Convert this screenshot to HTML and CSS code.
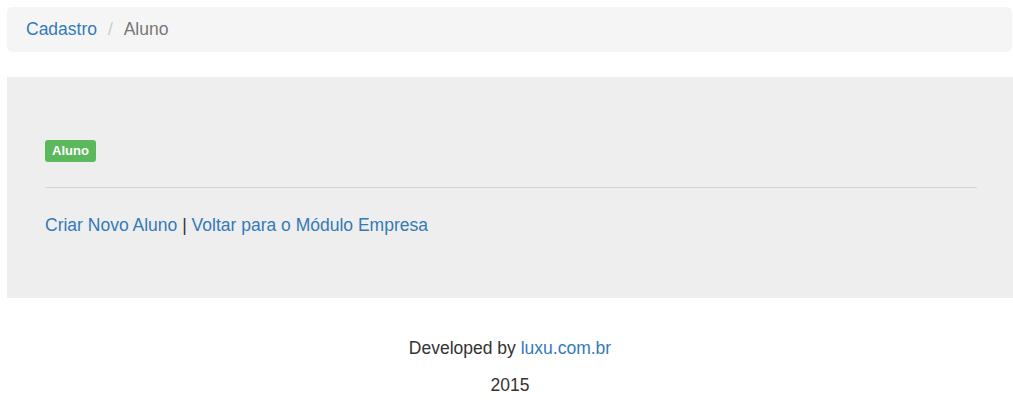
FILE: index.html
```html
<!DOCTYPE html>
<html lang="pt-BR">
<head>
<meta charset="utf-8">
<title>Cadastro - Aluno</title>
<link rel="stylesheet" href="styles.css">
</head>
<body>
<div class="page">
  <ol class="breadcrumb">
    <li><a href="#">Cadastro</a></li>
    <li class="active">Aluno</li>
  </ol>
  <div class="jumbotron">
    <div class="label-row"><span class="label">Aluno</span></div>
    <hr class="divider">
    <p class="links"><a href="#">Criar Novo Aluno</a> | <a href="#">Voltar para o Módulo Empresa</a></p>
  </div>
  <footer class="footer">
    <p class="footer-line">Developed by <a href="#">luxu.com.br</a></p>
    <p class="footer-line">2015</p>
  </footer>
</div>
</body>
</html>
```

FILE: styles.css
```css
html, body {
  margin: 0;
  padding: 0;
  background: #fff;
}
body {
  font-family: "Liberation Sans", Arial, Helvetica, sans-serif;
  font-size: 17.5px;
  line-height: 25px;
  color: #333;
}
a {
  color: #337ab7;
  text-decoration: none;
}
.page {
  padding: 7px 0 0 7px;
}
.breadcrumb {
  list-style: none;
  margin: 0 1px 25px 0;
  padding: 10px 19px;
  background: #f5f5f5;
  border-radius: 5px;
}
.breadcrumb li {
  display: inline-block;
}
.breadcrumb li + li::before {
  content: "/\00a0";
  padding: 0 6px;
  color: #ccc;
}
.breadcrumb .active {
  color: #777;
}
.jumbotron {
  background: #eee;
  padding: 63px 36px 60px 38px;
  margin-bottom: 38px;
}
.label-row {
  display: flex;
}
.label {
  font-size: 13px;
  font-weight: bold;
  line-height: 13px;
  padding: 4px 7px 5px;
  color: #fff;
  background: #5cb85c;
  border-radius: 3px;
}
.divider {
  border: 0;
  border-top: 1px solid #d5d5d5;
  margin: 25px 0 25px;
  height: 0;
}
.links {
  margin: 0;
}
.footer {
  text-align: center;
}
.footer-line {
  margin: 0 0 12px;
}
```
